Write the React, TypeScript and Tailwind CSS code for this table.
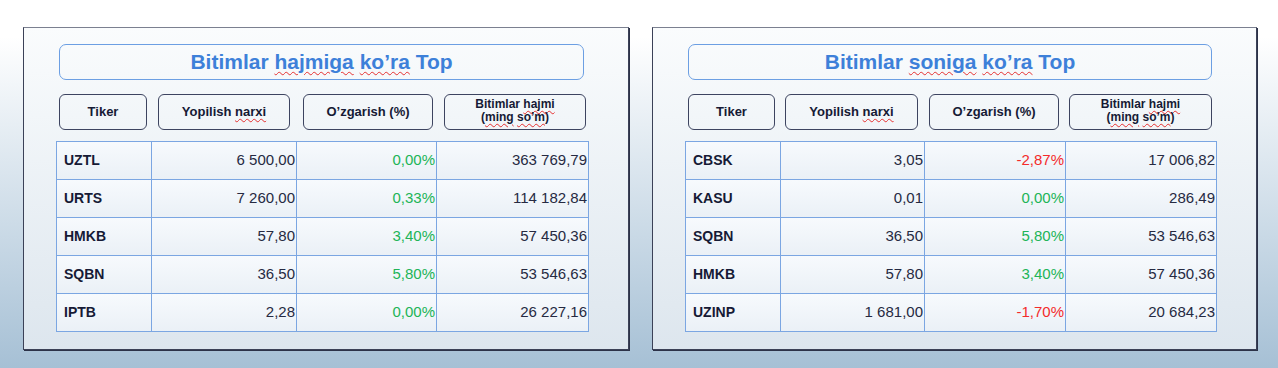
type Row = { t: string; p: string; c: string; v: string; neg?: boolean };

const left: Row[] = [
  { t: 'UZTL', p: '6 500,00', c: '0,00%', v: '363 769,79' },
  { t: 'URTS', p: '7 260,00', c: '0,33%', v: '114 182,84' },
  { t: 'HMKB', p: '57,80', c: '3,40%', v: '57 450,36' },
  { t: 'SQBN', p: '36,50', c: '5,80%', v: '53 546,63' },
  { t: 'IPTB', p: '2,28', c: '0,00%', v: '26 227,16' },
];

const right: Row[] = [
  { t: 'CBSK', p: '3,05', c: '-2,87%', v: '17 006,82', neg: true },
  { t: 'KASU', p: '0,01', c: '0,00%', v: '286,49' },
  { t: 'SQBN', p: '36,50', c: '5,80%', v: '53 546,63' },
  { t: 'HMKB', p: '57,80', c: '3,40%', v: '57 450,36' },
  { t: 'UZINP', p: '1 681,00', c: '-1,70%', v: '20 684,23', neg: true },
];

function Sp({ children }: { children: React.ReactNode }) {
  return (
    <span className="underline decoration-wavy decoration-[#e53030] decoration-1 underline-offset-[2px]">
      {children}
    </span>
  );
}

function HeadBtn({ w, children }: { w: string; children: React.ReactNode }) {
  return (
    <div className={`${w} h-[36px] shrink-0 rounded-[6px] border border-[#3d4460] flex items-center justify-center text-center font-bold text-[13px] text-[#161a35]`}>
      {children}
    </div>
  );
}

function Panel({
  title,
  rows,
  btnW,
  gaps,
  colW,
  panelW,
  titleW,
}: {
  title: React.ReactNode;
  rows: Row[];
  btnW: string[];
  gaps: string[];
  colW: string[];
  panelW: string;
  titleW: string;
}) {
  return (
    <div className={`${panelW} h-[323px] shrink-0 border border-[#3b4157] border-t-[#7b8090] shadow-[1px_1px_0_#2c3248] bg-gradient-to-b from-[#fafcfd] to-[#dde6ee] pt-[16px] pl-[32px]`}>
      <div className="ml-[3px]">
        <div className={`${titleW} h-[36px] rounded-[7px] border border-[#6c9fe3] flex items-center justify-center text-[21px] font-bold text-[#3d80d9]`}>
          {title}
        </div>
        <div className="flex mt-[14px]">
          <HeadBtn w={btnW[0]}>Tiker</HeadBtn>
          <div className={gaps[0]} />
          <HeadBtn w={btnW[1]}>
            <span>
              Yopilish <Sp>narxi</Sp>
            </span>
          </HeadBtn>
          <div className={gaps[1]} />
          <HeadBtn w={btnW[2]}>O’zgarish (%)</HeadBtn>
          <div className={gaps[2]} />
          <HeadBtn w={btnW[3]}>
            <span className="text-[12px] leading-[13px] -mt-[2px]">
              Bitimlar <Sp>hajmi</Sp>
              <br />
              (<Sp>ming</Sp> <Sp>so’m</Sp>)
            </span>
          </HeadBtn>
        </div>
      </div>
      <table className="mt-[11px] border-collapse">
        <tbody>
          {rows.map((r) => (
            <tr key={r.t} className="h-[38px] bg-gradient-to-b from-[#f7fafd] to-[#eaf0f6]">
              <td className={`${colW[0]} border border-[#7ba6e2] pl-[7px] font-bold text-[14px] text-[#161a35]`}>{r.t}</td>
              <td className={`${colW[1]} border border-[#7ba6e2] pr-[1px] text-right text-[15px] text-[#262a42]`}>{r.p}</td>
              <td className={`${colW[2]} border border-[#7ba6e2] pr-[1px] text-right text-[15px] ${r.neg ? 'text-[#f42b2b]' : 'text-[#21b457]'}`}>{r.c}</td>
              <td className={`${colW[3]} border border-[#7ba6e2] pr-[1px] text-right text-[15px] text-[#262a42]`}>{r.v}</td>
            </tr>
          ))}
        </tbody>
      </table>
    </div>
  );
}

export default function App() {
  return (
    <div
      className="w-full h-[368px] bg-gradient-to-b from-white from-10% to-[#a6c0d5] flex pt-[27px] pl-[23px] gap-[23px]"
      style={{ fontFamily: '"Liberation Sans", Arial, sans-serif' }}
    >
      <Panel
        panelW="w-[606px]"
        titleW="w-[525px]"
        title={
          <span>
            Bitimlar <Sp>hajmiga</Sp> <Sp>ko’ra</Sp> Top
          </span>
        }
        rows={left}
        btnW={['w-[88px]', 'w-[132px]', 'w-[130px]', 'w-[142px]']}
        gaps={['w-[11px]', 'w-[13px]', 'w-[11px]']}
        colW={['w-[95px]', 'w-[145px]', 'w-[140px]', 'w-[152px]']}
      />
      <Panel
        panelW="w-[605px]"
        titleW="w-[524px]"
        title={
          <span>
            Bitimlar <Sp>soniga</Sp> <Sp>ko’ra</Sp> Top
          </span>
        }
        rows={right}
        btnW={['w-[87px]', 'w-[133px]', 'w-[130px]', 'w-[143px]']}
        gaps={['w-[10px]', 'w-[11px]', 'w-[10px]']}
        colW={['w-[95px]', 'w-[144px]', 'w-[141px]', 'w-[151px]']}
      />
    </div>
  );
}
